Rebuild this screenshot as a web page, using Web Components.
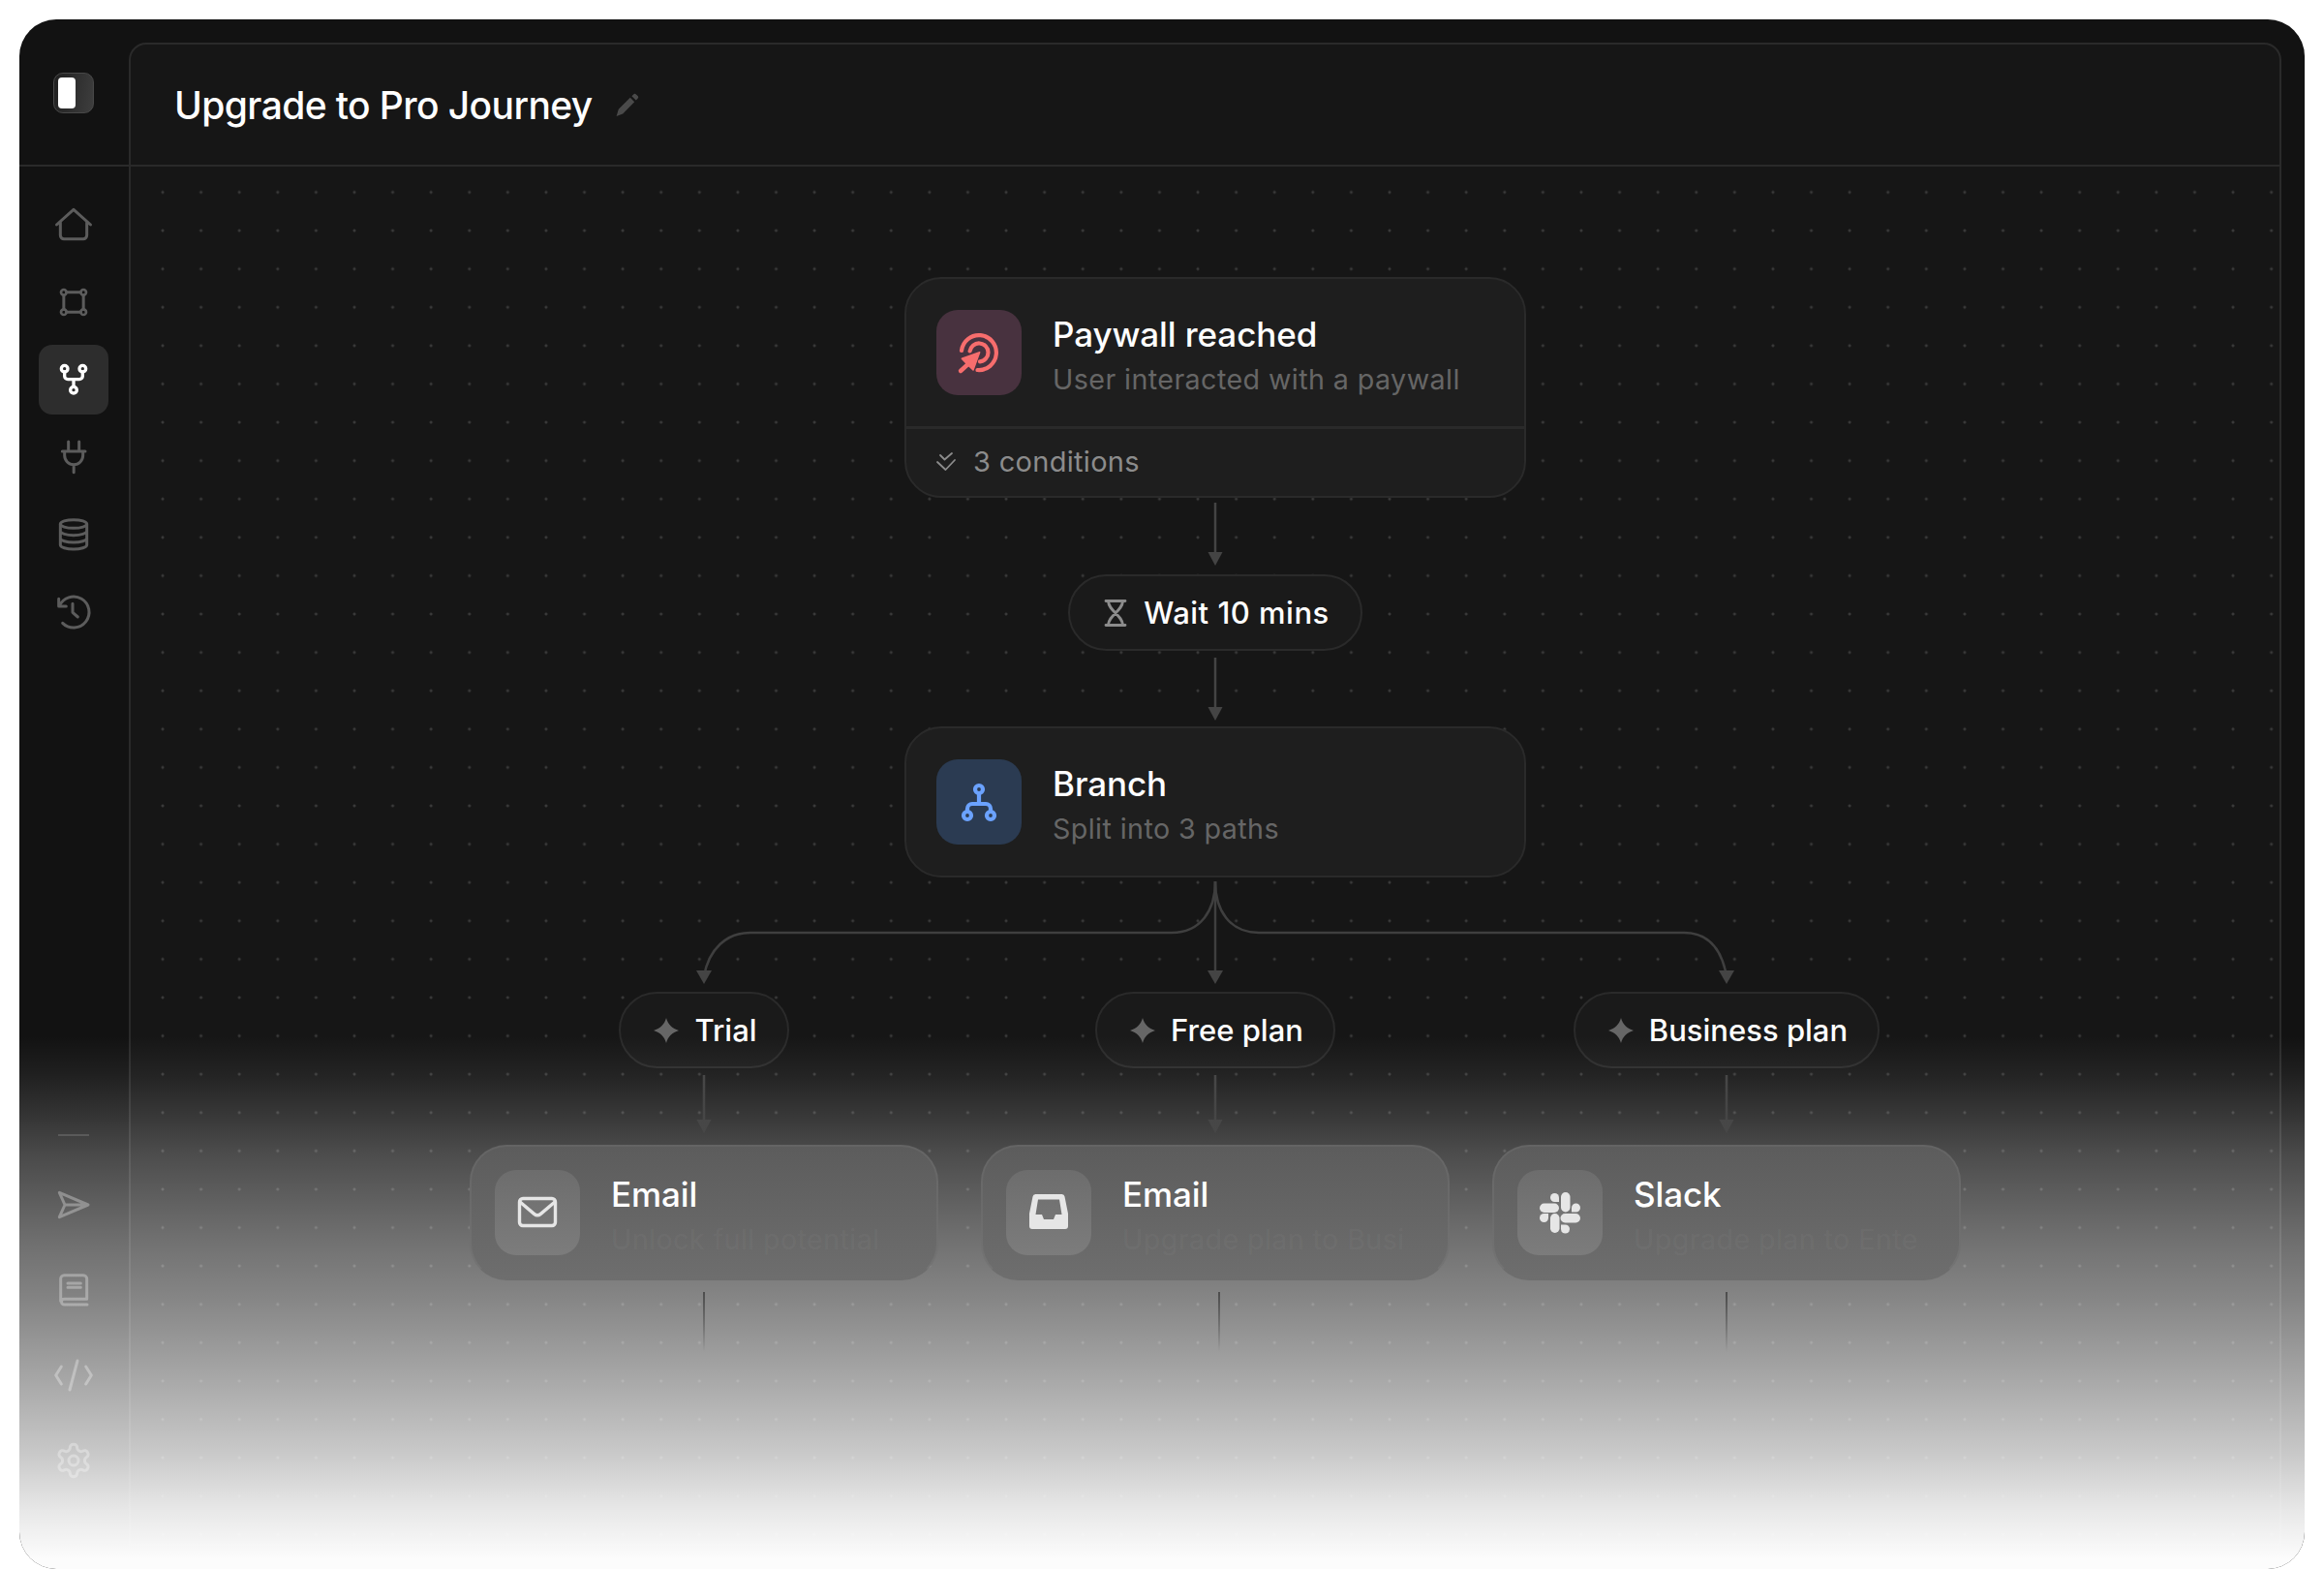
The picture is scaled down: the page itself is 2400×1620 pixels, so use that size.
<!DOCTYPE html>
<html>
<head>
<meta charset="utf-8">
<title>Upgrade to Pro Journey</title>
<style>
  html, body { margin: 0; background: #fff; }
  body { font-family: Inter, "Liberation Sans", sans-serif; }
</style>
</head>
<body>
<journey-app>
  <side-rail slot="rail">
    <rail-item icon="home"></rail-item>
    <rail-item icon="frame"></rail-item>
    <rail-item icon="fork" active></rail-item>
    <rail-item icon="plug"></rail-item>
    <rail-item icon="database"></rail-item>
    <rail-item icon="history"></rail-item>
    <rail-item slot="bottom" icon="send"></rail-item>
    <rail-item slot="bottom" icon="book"></rail-item>
    <rail-item slot="bottom" icon="code"></rail-item>
    <rail-item slot="bottom" icon="gear"></rail-item>
  </side-rail>

  <journey-header slot="header">Upgrade to Pro Journey</journey-header>

  <journey-canvas>
    <flow-node heading="Paywall reached" sub="User interacted with a paywall" icon="target" tone="red">
      <ui-icon slot="foot-icon" name="checks" size="20"></ui-icon>
      3 conditions
    </flow-node>
    <flow-arrow len="65" style="margin-top:5px"></flow-arrow>
    <flow-pill icon="hourglass" style="margin-top:9px;letter-spacing:.5px">Wait 10 mins</flow-pill>
    <flow-arrow len="65" style="margin-top:7px"></flow-arrow>
    <flow-node heading="Branch" sub="Split into 3 paths" icon="split" tone="blue" style="margin-top:6px"></flow-node>
    <flow-fork></flow-fork>
    <flow-paths>
      <flow-path label="Trial" heading="Email" sub="Unlock full potential" icon="mail"></flow-path>
      <flow-path label="Free plan" heading="Email" sub="Upgrade plan to Busi" icon="inbox" shift="8"></flow-path>
      <flow-path label="Business plan" heading="Slack" sub="Upgrade plan to Ente" icon="slack"></flow-path>
    </flow-paths>
  </journey-canvas>
</journey-app>

<script>
// icon set, all drawn by hand against the reference
const STROKE = (d, w) => `<path d="${d}" fill="none" stroke="currentColor" stroke-width="${w}" stroke-linecap="round" stroke-linejoin="round"/>`;
const ICONS = {
  home: ["0 0 24 24", STROKE("M1.5 12 12 2.6 22.5 12M3.8 10.2v8.4a2.2 2.2 0 0 0 2.2 2.2h12a2.2 2.2 0 0 0 2.2-2.2v-8.4", 1.8)],
  frame: ["0 0 24 24", STROKE("M7.6 5.9h8.8M7.6 18.1h8.8M5.9 7.6v8.8M18.1 7.6v8.8", 1.8) +
    `<g fill="none" stroke="currentColor" stroke-width="1.6"><circle cx="5.9" cy="5.9" r="1.7"/><circle cx="18.1" cy="5.9" r="1.7"/><circle cx="5.9" cy="18.1" r="1.7"/><circle cx="18.1" cy="18.1" r="1.7"/></g>`],
  fork: ["0 0 24 24", STROKE("M6.4 7.2v2.6a2 2 0 0 0 2 2h7.2a2 2 0 0 0 2-2V7.2M12 11.8v4.6", 2) +
    `<g fill="none" stroke="currentColor" stroke-width="2"><circle cx="6.4" cy="5.2" r="2"/><circle cx="17.6" cy="5.2" r="2"/><circle cx="12" cy="18.4" r="2"/></g>`],
  plug: ["0 0 24 24", STROKE("M8.8 2.4v5.2M15.4 2.4v5.2M5 8.4h14.2M6.4 8.4V11a5.7 5.7 0 0 0 11.4 0V8.4M12.1 16.7v4.7", 1.8)],
  database: ["0 0 24 24", `<ellipse cx="12" cy="5.4" rx="8.2" ry="2.6" fill="none" stroke="currentColor" stroke-width="1.8"/>` +
    STROKE("M3.8 5.4v13c0 1.4 3.7 2.6 8.2 2.6s8.2-1.2 8.2-2.6v-13M3.8 9.8c0 1.4 3.7 2.6 8.2 2.6s8.2-1.2 8.2-2.6M3.8 14.2c0 1.4 3.7 2.6 8.2 2.6s8.2-1.2 8.2-2.6", 1.8)],
  history: ["0 0 24 24", STROKE("M3.2 8.2A9.6 9.6 0 1 1 5.2 18.8M2.8 3.8v4.6h4.6M11.4 6.8v5.4l3.2 2.8", 1.8)],
  send: ["0 0 24 24", STROKE("M3.2 4.4 21 12 3.2 19.6 6.6 12ZM6.6 12H21", 1.8)],
  book: ["0 0 24 24", STROKE("M4 18.8V5a2.2 2.2 0 0 1 2.2-2.2H18A2.2 2.2 0 0 1 20.2 5v12.6H6.2a1.7 1.7 0 0 0 0 3.4h14.2M8.4 7.8h8M8.4 10.4h8", 1.8)],
  code: ["0 0 24 24", STROKE("M4.4 6.6 1 12l3.4 5.4M19.6 6.6 23 12l-3.4 5.4M14.4 3 9.6 21", 1.8)],
  gear: ["0 0 24 24", STROKE("M12.22 2h-.44a2 2 0 0 0-2 2v.18a2 2 0 0 1-1 1.73l-.43.25a2 2 0 0 1-2 0l-.15-.08a2 2 0 0 0-2.73.73l-.22.38a2 2 0 0 0 .73 2.73l.15.1a2 2 0 0 1 1 1.72v.51a2 2 0 0 1-1 1.74l-.15.09a2 2 0 0 0-.73 2.73l.22.38a2 2 0 0 0 2.73.73l.15-.08a2 2 0 0 1 2 0l.43.25a2 2 0 0 1 1 1.73V20a2 2 0 0 0 2 2h.44a2 2 0 0 0 2-2v-.18a2 2 0 0 1 1-1.73l.43-.25a2 2 0 0 1 2 0l.15.08a2 2 0 0 0 2.73-.73l.22-.39a2 2 0 0 0-.73-2.73l-.15-.08a2 2 0 0 1-1-1.74v-.5a2 2 0 0 1 1-1.74l.15-.09a2 2 0 0 0 .73-2.73l-.22-.38a2 2 0 0 0-2.73-.73l-.15.08a2 2 0 0 1-2 0l-.43-.25a2 2 0 0 1-1-1.73V4a2 2 0 0 0-2-2z", 1.8) +
    `<circle cx="12" cy="12" r="3" fill="none" stroke="currentColor" stroke-width="1.8"/>`],
  pencil: ["0 0 24 24", `<path fill="currentColor" d="M.6 24l2.2-7.2L14.8 4.8l4.4 4.4L7.2 21.4ZM16.4 3.2l1.8-1.8a1.9 1.9 0 0 1 2.7 0l1.7 1.7a1.9 1.9 0 0 1 0 2.7l-1.8 1.8Z"/>`],
  target: ["0 0 48 48", STROKE("M6 22A18 18 0 1 1 22.5 42", 4.2) + STROKE("M14.6 22.5A9.5 9.5 0 1 1 25 33.4", 4.2) +
    `<path fill="currentColor" stroke="currentColor" stroke-width="1.5" stroke-linejoin="round" d="M24.7 23.7 18 42 12.2 36.5 6.3 30.3Z"/>` + STROKE("M5 43 12.2 36.5", 4.4)],
  split: ["0 0 48 48", STROKE("M24 15v10M12 34v-3a5 5 0 0 1 5-5h14a5 5 0 0 1 5 5v3", 4.2) +
    `<g fill="none" stroke="currentColor" stroke-width="4.2"><circle cx="24" cy="11" r="4"/><circle cx="12" cy="38" r="4"/><circle cx="36" cy="38" r="4"/></g>`],
  mail: ["0 0 48 48", `<rect x="5.5" y="9.5" width="37" height="28" rx="3.5" fill="none" stroke="currentColor" stroke-width="3.4"/>` + STROKE("M6 13l14.6 12.4a5.3 5.3 0 0 0 6.8 0L42 13", 3.4)],
  inbox: ["0 0 48 48", `<path fill="currentColor" fill-rule="evenodd" d="M10.5 5h27a3 3 0 0 1 3 2.6L44 25v13a3 3 0 0 1-3 3H7a3 3 0 0 1-3-3V25L7.5 7.6A3 3 0 0 1 10.5 5ZM13 10.5h22l2.5 15.5H31l-2 5H19l-2-5h-6.5Z"/>`],
  slack: ["0 0 42 42", `<g fill="currentColor"><rect x="0" y="11.5" width="20" height="9.5" rx="4.7"/><path d="M20 10h-4.5a4.5 4.5 0 1 1 4.5-4.5Z"/><rect x="22" y="0" width="9.5" height="20.5" rx="4.7"/><path d="M33 20.5V16a4.5 4.5 0 1 1 4.5 4.5Z"/><rect x="21.5" y="22" width="20.5" height="9.5" rx="4.7"/><path d="M22 33.5h4.5a4.5 4.5 0 1 1-4.5 4.5Z"/><rect x="11" y="22" width="9.5" height="20" rx="4.7"/><path d="M9 22v4.5a4.5 4.5 0 1 1-4.5-4.5Z"/></g>`],
  star: ["0 0 26 26", `<path fill="currentColor" d="M13 0C15 7 19 10.5 26 13 19 15.5 15 19 13 26 11 19 7 15.5 0 13 7 10.5 11 7 13 0Z"/>`],
  hourglass: ["0 0 24 28", STROKE("M2 1.5h20M2 26.5h20M4.5 2C5 7 8 10 12 14c4 4 7 7 7.5 12M19.5 2C19 7 16 10 12 14c-4 4-7 7-7.5 12", 2.8)],
  checks: ["0 0 20 20", STROKE("M4 3l4.5 4.5L16 1M1 10l8.5 8L19 8", 1.8)]
};

class UiIcon extends HTMLElement {
  constructor() {
    super();
    this.attachShadow({ mode: "open" });
  }
  connectedCallback() {
    const [box, body] = ICONS[this.getAttribute("name")];
    const size = this.getAttribute("size") || 40;
    const high = this.getAttribute("high") || size;
    this.shadowRoot.innerHTML = `
      <style>
        :host { display: inline-flex; flex: none; width: ${size}px; height: ${high}px; }
        svg { width: 100%; height: 100%; display: block; overflow: visible; }
      </style>
      <svg viewBox="${box}">${body}</svg>
    `;
  }
}
customElements.define("ui-icon", UiIcon);

class JourneyApp extends HTMLElement {
  constructor() {
    super();
    this.attachShadow({ mode: "open" });
    this.shadowRoot.innerHTML = `
      <style>
        :host {
          display: block;
          box-sizing: border-box;
          width: 2400px;
          height: 1620px;
          padding: 20px 20px 0;
          font-family: Inter, "Liberation Sans", sans-serif;
        }
        .frame {
          position: relative;
          height: 100%;
          display: grid;
          grid-template-columns: 113px 1fr;
          background: #121212;
          border-radius: 38px;
          overflow: hidden;
        }
        .panel {
          display: flex;
          flex-direction: column;
          margin: 24px 24px 24px 0;
          background: #161616;
          border: 2px solid #2a2a2a;
          border-radius: 18px 18px 0 0;
          min-height: 0;
        }
        /* white wash over the lower part of the whole window */
        .wash {
          position: absolute;
          inset: 0;
          z-index: 2;
          pointer-events: none;
          background: linear-gradient(to bottom,
            rgba(255,255,255,0) 1050px,
            rgba(255,255,255,.06) 1090px,
            rgba(255,255,255,.14) 1130px,
            rgba(255,255,255,.23) 1170px,
            rgba(255,255,255,.30) 1210px,
            rgba(255,255,255,.39) 1260px,
            rgba(255,255,255,.48) 1320px,
            rgba(255,255,255,.62) 1400px,
            rgba(255,255,255,.77) 1480px,
            rgba(255,255,255,.90) 1540px,
            rgba(255,255,255,.99) 1590px);
        }
      </style>
      <div class="frame">
        <slot name="rail"></slot>
        <div class="panel">
          <slot name="header"></slot>
          <slot></slot>
        </div>
        <div class="wash"></div>
      </div>
    `;
  }
}
customElements.define("journey-app", JourneyApp);

class SideRail extends HTMLElement {
  constructor() {
    super();
    this.attachShadow({ mode: "open" });
    this.shadowRoot.innerHTML = `
      <style>
        :host { display: flex; flex-direction: column; height: 100%; min-height: 0; }
        .top {
          box-sizing: border-box;
          height: 152px;
          flex: none;
          display: flex;
          align-items: center;
          justify-content: center;
          padding-right: 1px;
          border-bottom: 2px solid #2a2a2a;
        }
        .logo {
          box-sizing: border-box;
          width: 42px;
          height: 42px;
          padding: 4px 18px 4px 4px;
          border: 1px solid #484848;
          border-radius: 10px;
          background: linear-gradient(100deg, #1f1f1f, #3e3e3e);
          margin-top: 1px;
        }
        .logo i { display: block; height: 100%; background: #fff; border-radius: 4px; }
        nav {
          flex: 1;
          display: flex;
          flex-direction: column;
          align-items: center;
          padding: 24px 1px 76px 0;
          gap: 8px;
        }
        .bottom {
          margin-top: auto;
          display: flex;
          flex-direction: column;
          align-items: center;
          gap: 16px;
        }
        hr { width: 32px; height: 2px; margin: 0 0 19px; border: 0; background: #333; }
      </style>
      <div class="top"><div class="logo"><i></i></div></div>
      <nav>
        <slot></slot>
        <div class="bottom">
          <hr>
          <slot name="bottom"></slot>
        </div>
      </nav>
    `;
  }
}
customElements.define("side-rail", SideRail);

class RailItem extends HTMLElement {
  constructor() {
    super();
    this.attachShadow({ mode: "open" });
  }
  connectedCallback() {
    this.shadowRoot.innerHTML = `
      <style>
        :host {
          display: flex;
          align-items: center;
          justify-content: center;
          width: 72px;
          height: 72px;
          border-radius: 14px;
          color: #5c5c5c;
        }
        :host([active]) { background: #2d2d2d; color: #fff; }
      </style>
      <ui-icon name="${this.getAttribute("icon")}" size="40"></ui-icon>
    `;
  }
}
customElements.define("rail-item", RailItem);

class JourneyHeader extends HTMLElement {
  constructor() {
    super();
    this.attachShadow({ mode: "open" });
    this.shadowRoot.innerHTML = `
      <style>
        :host {
          box-sizing: border-box;
          flex: none;
          height: 126px;
          display: flex;
          align-items: center;
          gap: 24px;
          padding-left: 45px;
          border-bottom: 2px solid #2a2a2a;
          color: #fff;
          font-size: 39px;
          font-weight: 500;
          letter-spacing: -0.6px;
        }
        ui-icon { color: #4a4a4a; }
      </style>
      <slot></slot>
      <ui-icon name="pencil" size="24"></ui-icon>
    `;
  }
}
customElements.define("journey-header", JourneyHeader);

class JourneyCanvas extends HTMLElement {
  constructor() {
    super();
    this.attachShadow({ mode: "open" });
    this.shadowRoot.innerHTML = `
      <style>
        :host {
          flex: 1;
          display: flex;
          flex-direction: column;
          align-items: center;
          padding: 114px 0 0 21px;
          min-height: 0;
          background-image: radial-gradient(circle at center, #3a3a3a 1.2px, transparent 1.8px);
          background-size: 39.6px 39.6px;
          background-position: 13.2px 6.7px;
        }
      </style>
      <slot></slot>
    `;
  }
}
customElements.define("journey-canvas", JourneyCanvas);

const TONES = {
  red: "background:#48323f;color:#f76d6d",
  blue: "background:#2b3b52;color:#6ba2ff",
  wash: "background:linear-gradient(#6d6d6d,#7c7c7c);color:#e6e6e6"
};

class FlowNode extends HTMLElement {
  constructor() {
    super();
    this.attachShadow({ mode: "open" });
  }
  connectedCallback() {
    const tone = this.getAttribute("tone") || "wash";
    const footed = this.childNodes.length > 0;
    const name = this.getAttribute("icon");
    const glyph = name === "slack" ? 42 : 48;
    this.shadowRoot.innerHTML = `
      <style>
        :host {
          display: block;
          box-sizing: border-box;
          width: 642px;
          flex: none;
          background: #1e1e1e;
          border: 2px solid #2a2a2a;
          border-radius: 38px;
        }
        :host(:not([tone])) {
          position: relative;
          z-index: 3;
          width: 484px;
          background: linear-gradient(#5c5c5c, #6e6e6e) border-box;
          border-color: rgba(255,255,255,.05);
          border-bottom-color: transparent;
        }
        .body { display: flex; gap: 32px; padding: 32px 31px; }
        :host(:not([tone])) .body { padding: 24px; gap: 32px; }
        .badge {
          width: 88px;
          height: 88px;
          flex: none;
          border-radius: 22px;
          display: flex;
          align-items: center;
          justify-content: center;
          ${TONES[tone]};
        }
        .text { height: 88px; padding-top: 3px; box-sizing: border-box; min-width: 0; }
        .heading {
          color: #fff;
          font-size: 35px;
          line-height: 44px;
          font-weight: 500;
          letter-spacing: -0.1px;
        }
        .sub {
          margin-top: 5px;
          color: #666;
          font-size: 28.7px;
          line-height: 40px;
          letter-spacing: 0.4px;
          white-space: nowrap;
        }
        :host(:not([tone])) .sub { color: rgba(255,255,255,.05); }
        .foot {
          box-sizing: border-box;
          display: flex;
          align-items: center;
          gap: 18px;
          height: 72px;
          padding: 0 0 2px 31px;
          border-top: 3px solid #2a2a2a;
          color: #8c8c8c;
          font-size: 29px;
          letter-spacing: 0.3px;
        }
        .foot[hidden] { display: none; }
      </style>
      <div class="body">
        <div class="badge"><ui-icon name="${name}" size="${glyph}"></ui-icon></div>
        <div class="text">
          <div class="heading">${this.getAttribute("heading")}</div>
          <div class="sub">${this.getAttribute("sub")}</div>
        </div>
      </div>
      <div class="foot" ${footed ? "" : "hidden"}>
        <slot name="foot-icon"></slot>
        <slot></slot>
      </div>
    `;
  }
}
customElements.define("flow-node", FlowNode);

class FlowPill extends HTMLElement {
  constructor() {
    super();
    this.attachShadow({ mode: "open" });
  }
  connectedCallback() {
    const name = this.getAttribute("icon") || "star";
    const hourglass = name === "hourglass";
    this.shadowRoot.innerHTML = `
      <style>
        :host {
          box-sizing: border-box;
          display: inline-flex;
          align-items: center;
          flex: none;
          height: 79px;
          gap: ${hourglass ? 17 : 16}px;
          padding: 0 ${hourglass ? 32 : 31}px 0 ${hourglass ? 35 : 34}px;
          background: #1a1a1a;
          border: 2px solid #2a2a2a;
          border-radius: 40px;
          color: #fff;
          font-size: 31px;
          font-weight: 500;
          white-space: nowrap;
        }
        ui-icon { color: ${hourglass ? "#8c8c8c" : "#666"}; }
      </style>
      <ui-icon name="${name}" size="${hourglass ? 24 : 26}" high="${hourglass ? 28 : 26}"></ui-icon>
      <slot></slot>
    `;
  }
}
customElements.define("flow-pill", FlowPill);

class FlowArrow extends HTMLElement {
  constructor() {
    super();
    this.attachShadow({ mode: "open" });
  }
  connectedCallback() {
    const len = +this.getAttribute("len") || 65;
    // the lower arrows sink into the wash, so they start dimmer and die out
    const fade = this.hasAttribute("fade");
    const id = "a" + Math.random().toString(36).slice(2);
    this.shadowRoot.innerHTML = `
      <style>
        :host { display: block; flex: none; width: 16px; height: ${len}px; }
        svg { display: block; }
      </style>
      <svg width="16" height="${len}" viewBox="0 0 16 ${len}">
        <defs>
          <linearGradient id="${id}" gradientUnits="userSpaceOnUse" x1="0" y1="0" x2="0" y2="${len}">
            <stop offset="0" stop-color="#3c3c3c"/>
            <stop offset="1" stop-color="#1e1e1e"/>
          </linearGradient>
        </defs>
        <rect x="6.75" y="0" width="2.5" height="${len - 10}" fill="${fade ? `url(#${id})` : "#444"}"/>
        <path d="M0.5 ${len - 14}H15.5L8 ${len}Z" fill="${fade ? `url(#${id})` : "#444"}"/>
      </svg>
    `;
  }
}
customElements.define("flow-arrow", FlowArrow);

class FlowFork extends HTMLElement {
  constructor() {
    super();
    this.attachShadow({ mode: "open" });
    this.shadowRoot.innerHTML = `
      <style>
        :host { display: block; flex: none; width: 1200px; height: 106px; margin-top: 4px; }
        svg { display: block; }
      </style>
      <svg width="1200" height="106" viewBox="0 0 1200 106" fill="none" stroke="#3f3f3f" stroke-width="2.5">
        <path d="M600 0V96"/>
        <path d="M600 0C600 30 585 53 555 53H120C95 53 77 70 72 98"/>
        <path d="M600 0C600 30 615 53 645 53H1084C1109 53 1123 70 1128 98"/>
        <g fill="#444" stroke="none">
          <path d="M64 92H80L72 106Z"/>
          <path d="M592 92H608L600 106Z"/>
          <path d="M1120 92H1136L1128 106Z"/>
        </g>
      </svg>
    `;
  }
}
customElements.define("flow-fork", FlowFork);

class FlowPaths extends HTMLElement {
  constructor() {
    super();
    this.attachShadow({ mode: "open" });
    this.shadowRoot.innerHTML = `
      <style>
        :host {
          display: grid;
          grid-template-columns: repeat(3, 484px);
          column-gap: 44px;
          margin-top: 8px;
        }
      </style>
      <slot></slot>
    `;
  }
}
customElements.define("flow-paths", FlowPaths);

class FlowPath extends HTMLElement {
  constructor() {
    super();
    this.attachShadow({ mode: "open" });
  }
  connectedCallback() {
    const shift = this.getAttribute("shift") || 0;
    this.shadowRoot.innerHTML = `
      <style>
        :host { display: flex; flex-direction: column; align-items: center; }
        flow-arrow { margin: 7px 0 12px; }
        .tail {
          position: relative;
          z-index: 3;
          width: 2.5px;
          height: 62px;
          margin: 12px 0 0 ${shift}px;
          background: linear-gradient(#4c4c4c, rgba(76,76,76,0));
        }
      </style>
      <flow-pill>${this.getAttribute("label")}</flow-pill>
      <flow-arrow len="60" fade></flow-arrow>
      <flow-node heading="${this.getAttribute("heading")}" sub="${this.getAttribute("sub")}" icon="${this.getAttribute("icon")}"></flow-node>
      <div class="tail"></div>
    `;
  }
}
customElements.define("flow-path", FlowPath);
</script>
</body>
</html>
